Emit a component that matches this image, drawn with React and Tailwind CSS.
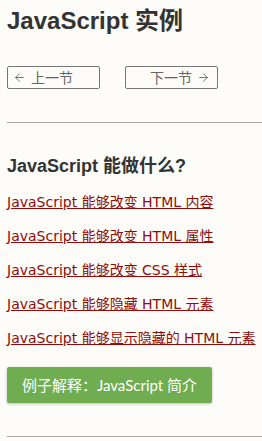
import { ArrowLeft, ArrowRight } from 'lucide-react';

const links = [
  'JavaScript 能够改变 HTML 内容',
  'JavaScript 能够改变 HTML 属性',
  'JavaScript 能够改变 CSS 样式',
  'JavaScript 能够隐藏 HTML 元素',
  'JavaScript 能够显示隐藏的 HTML 元素',
];

const headFont = "font-['Liberation_Sans','Noto_Sans_CJK_SC',sans-serif]";
const linkFont = "font-['DejaVu_Sans','Noto_Sans_CJK_SC',sans-serif]";
const btnFont = "font-['Lato','Noto_Sans_CJK_SC',sans-serif]";

export default function App() {
  return (
    <div className="min-h-[441px] w-[262px] overflow-hidden bg-[#fdfcf8] pl-[7px]">
      <h1 className={`${headFont} pt-[5px] text-[24px] font-bold leading-[32px] text-[#333]`}>
        JavaScript 实例
      </h1>

      {/* prev / next */}
      <div className="mt-[29px] flex gap-[25px]">
        <button className={`${btnFont} flex h-[23px] w-[93px] items-center gap-[5px] rounded-[2px] border border-[#777] pl-[5px] text-[14px] leading-none text-[#666]`}>
          <ArrowLeft size={13} strokeWidth={1.7} /> 上一节
        </button>
        <button className={`${btnFont} flex h-[23px] w-[93px] items-center justify-end gap-[5px] rounded-[2px] border border-[#777] pr-[7px] text-[14px] leading-none text-[#666]`}>
          下一节 <ArrowRight size={13} strokeWidth={1.7} />
        </button>
      </div>

      <hr className="mt-[33px] border-t border-[#aaa]" />

      <h2 className={`${headFont} mt-[31px] text-[18px] font-bold leading-[24px] text-[#333]`}>
        JavaScript 能做什么?
      </h2>

      <div className="mt-[12px] flex flex-col gap-[10px]">
        {links.map(t => (
          <a
            key={t}
            href="#"
            className={`${linkFont} block whitespace-nowrap text-[14px] leading-[24px] text-[#900b09] underline decoration-[#900b09]`}
          >
            {t}
          </a>
        ))}
      </div>

      <button className={`${btnFont} mt-[17px] flex h-[36px] w-[205px] items-center justify-center rounded-[2px] bg-[#70ad50] text-[15px] text-white shadow-[0_1px_3px_rgba(0,0,0,0.25)]`}>
        例子解释：JavaScript 简介
      </button>

      <hr className="mt-[33px] border-t border-[#aaa]" />
    </div>
  );
}
